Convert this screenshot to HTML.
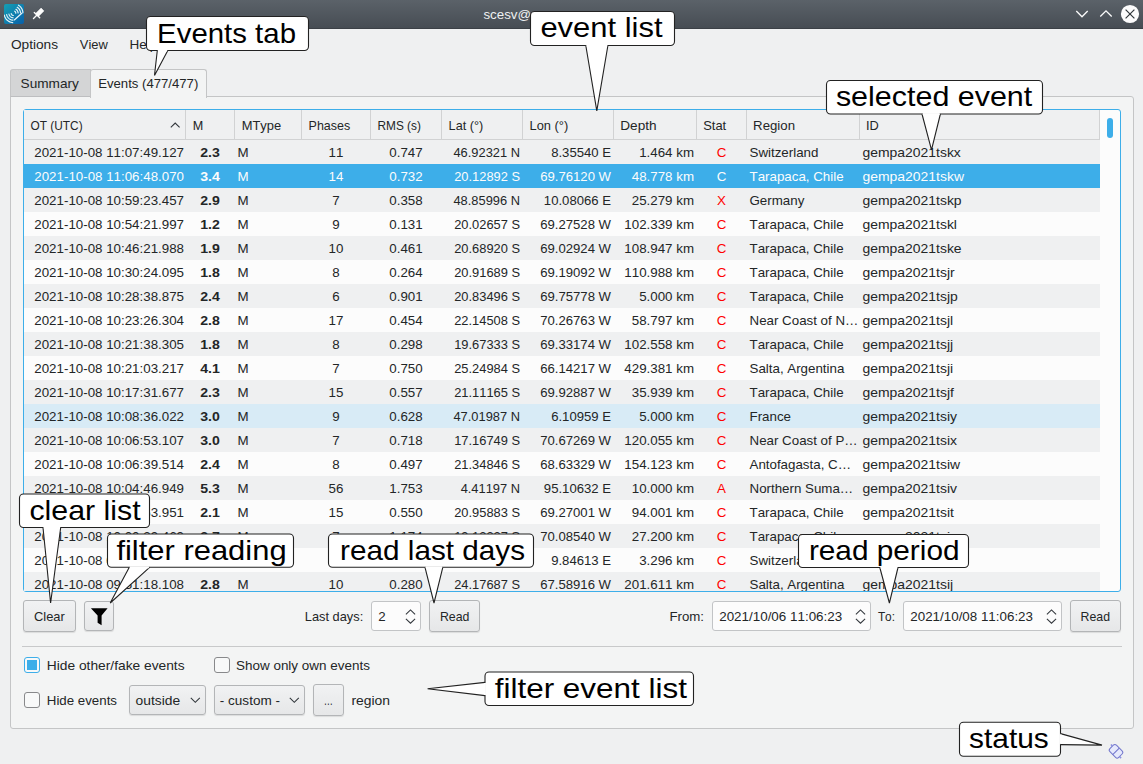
<!DOCTYPE html>
<html><head><meta charset="utf-8">
<style>
*{margin:0;padding:0;box-sizing:border-box}
html,body{width:1143px;height:764px;overflow:hidden;background:#eff0f1;font-family:"Liberation Sans",sans-serif;color:#232627}
text{font-kerning:none}
.abs{position:absolute}
.btn{position:absolute;border:1px solid #b3b5b7;border-radius:3px;background:linear-gradient(#f1f2f3,#e6e7e8);box-shadow:0 1px 1px rgba(0,0,0,0.10)}
.spin{position:absolute;border:1px solid #c2c4c6;border-radius:3px;background:#fcfcfc}
.cb{position:absolute;width:16px;height:16px;border:1px solid #88898b;border-radius:3px;background:#f8f9f9}
</style></head><body>
<div class="abs" style="left:0;top:0;width:1143px;height:29px;background:linear-gradient(#5b6269,#464c53)"></div>
<div class="abs" style="left:0;top:28px;width:1143px;height:1px;background:#3b4046"></div>
<svg class="abs" style="left:4px;top:4px" width="20" height="20" viewBox="0 0 20 20">
  <defs><linearGradient id="lg" x1="0" y1="0" x2="1" y2="1"><stop offset="0" stop-color="#14a0b5"/><stop offset="1" stop-color="#0a5fa8"/></linearGradient></defs>
  <rect x="0" y="0" width="20" height="20" rx="2" fill="url(#lg)"/>
  <g fill="none" stroke="#e3f1f7" stroke-width="1.2" stroke-linecap="round" stroke-linejoin="round">
<path d="M8.68 18.56 L7.69 18.42 L6.73 18.18 L5.79 17.84 L4.90 17.39 L4.05 16.86 L3.27 16.24 L2.56 15.54 L1.93 14.77 L1.38 13.94 L0.92 13.05 L0.56 12.12 L0.31 11.15"/>
<path d="M14.48 1.23 L15.10 1.65 L15.69 2.12 L16.23 2.64 L16.74 3.20 L17.19 3.80 L17.60 4.43 L17.95 5.09 L18.26 5.78 L18.50 6.49 L18.69 7.22 L18.82 7.96 L18.89 8.71"/>
<path d="M8.89 16.17 L8.15 16.07 L7.43 15.89 L6.74 15.63 L6.07 15.30 L5.44 14.90 L4.86 14.44 L4.33 13.92 L3.86 13.35 L3.45 12.73 L3.11 12.07 L2.85 11.37 L2.65 10.66"/>
<path d="M13.21 3.26 L13.67 3.58 L14.11 3.93 L14.51 4.32 L14.89 4.73 L15.23 5.18 L15.53 5.65 L15.80 6.14 L16.02 6.65 L16.20 7.18 L16.34 7.72 L16.44 8.28 L16.49 8.83"/>
<path d="M9.10 13.78 L8.62 13.71 L8.14 13.60 L7.68 13.43 L7.25 13.21 L6.83 12.95 L6.45 12.65 L6.10 12.30 L5.79 11.93 L5.53 11.52 L5.30 11.08 L5.13 10.63 L5.00 10.16"/>
<path d="M11.94 5.30 L12.24 5.51 L12.53 5.74 L12.79 5.99 L13.04 6.26 L13.26 6.56 L13.46 6.87 L13.64 7.19 L13.78 7.53 L13.90 7.87 L14.00 8.23 L14.06 8.59 L14.09 8.96"/>
<path d="M9.30 11.49 L9.06 11.46 L8.82 11.40 L8.59 11.31 L8.37 11.21 L8.17 11.07 L7.98 10.92 L7.80 10.75 L7.65 10.56 L7.51 10.36 L7.40 10.14 L7.31 9.91 L7.25 9.68"/>
<path d="M10.72 7.25 L10.87 7.35 L11.01 7.47 L11.15 7.60 L11.27 7.73 L11.38 7.88 L11.48 8.03 L11.57 8.19 L11.64 8.36 L11.70 8.54 L11.75 8.72 L11.78 8.90 L11.80 9.08"/>
  </g>
  <path d="M10.3 15.9 L17.8 9.3" stroke="#e3f1f7" stroke-width="1.3" stroke-linecap="round"/>
</svg>
<svg class="abs" style="left:32px;top:7px" width="14" height="14" viewBox="0 0 14 14">
  <path d="M6.4 9.4 L11.9 3.9 L9.1 1.1 L3.6 6.6 Z" fill="#fcfcfc" stroke="#fcfcfc" stroke-width="0.6" stroke-linejoin="round"/>
  <path d="M2.3 5.4 L7.7 10.7" stroke="#fcfcfc" stroke-width="1.35" stroke-linecap="round"/>
  <path d="M5 8 L1.5 11.4" stroke="#fcfcfc" stroke-width="1.4" stroke-linecap="round"/>
</svg>
<svg class="abs" style="left:1075px;top:10px" width="14" height="9" viewBox="0 0 14 9"><path d="M1.3 1 L7 6.8 L12.7 1" fill="none" stroke="#fcfcfc" stroke-width="1.3"/></svg>
<svg class="abs" style="left:1099px;top:9px" width="14" height="9" viewBox="0 0 14 9"><path d="M1.3 7.5 L7 1.8 L12.7 7.5" fill="none" stroke="#fcfcfc" stroke-width="1.3"/></svg>
<svg class="abs" style="left:1120px;top:4px" width="20" height="20" viewBox="0 0 20 20"><circle cx="10" cy="10" r="9.1" fill="#fcfcfc"/><path d="M5.6 5.6 L14.4 14.4 M14.4 5.6 L5.6 14.4" stroke="#31363b" stroke-width="1.2"/></svg>

<!-- tab pane -->
<div class="abs" style="left:10px;top:96px;width:1124px;height:633px;background:#f3f4f4;border:1px solid #c4c5c6;border-radius:0 3px 3px 3px"></div>
<div class="abs" style="left:10px;top:69px;width:81px;height:28px;background:#d4d5d6;border:1px solid #c4c5c6;border-bottom:1px solid #bdbec0;border-radius:3px 0 0 0"></div>
<div class="abs" style="left:90px;top:69px;width:117px;height:29px;background:#f3f4f4;border:1px solid #c4c5c6;border-bottom:none;border-radius:3px 3px 0 0"></div>

<!-- table frame -->
<div class="abs" style="left:23px;top:109px;width:1098px;height:483px;border:1px solid #3daee9;border-radius:3px;background:#fcfcfc"></div>
<div class="abs" style="left:24px;top:110px;width:1076px;height:29px;background:#eff0f1"></div>
<div class="abs" style="left:24px;top:139px;width:1076px;height:1px;background:#d1d2d3"></div>
<div class="abs" style="left:185px;top:110px;width:1px;height:29px;background:#d1d2d3"></div>
<div class="abs" style="left:234px;top:110px;width:1px;height:29px;background:#d1d2d3"></div>
<div class="abs" style="left:301px;top:110px;width:1px;height:29px;background:#d1d2d3"></div>
<div class="abs" style="left:370px;top:110px;width:1px;height:29px;background:#d1d2d3"></div>
<div class="abs" style="left:441px;top:110px;width:1px;height:29px;background:#d1d2d3"></div>
<div class="abs" style="left:522px;top:110px;width:1px;height:29px;background:#d1d2d3"></div>
<div class="abs" style="left:613px;top:110px;width:1px;height:29px;background:#d1d2d3"></div>
<div class="abs" style="left:696px;top:110px;width:1px;height:29px;background:#d1d2d3"></div>
<div class="abs" style="left:746px;top:110px;width:1px;height:29px;background:#d1d2d3"></div>
<div class="abs" style="left:859px;top:110px;width:1px;height:29px;background:#d1d2d3"></div>
<div class="abs" style="left:1099px;top:110px;width:1px;height:29px;background:#d1d2d3"></div>
<div class="abs" style="left:24px;top:140px;width:1076px;height:24px;background:#eff0f1"></div>
<div class="abs" style="left:24px;top:164px;width:1076px;height:24px;background:#3daee9"></div>
<div class="abs" style="left:24px;top:188px;width:1076px;height:24px;background:#eff0f1"></div>
<div class="abs" style="left:24px;top:212px;width:1076px;height:24px;background:#fcfcfc"></div>
<div class="abs" style="left:24px;top:236px;width:1076px;height:24px;background:#eff0f1"></div>
<div class="abs" style="left:24px;top:260px;width:1076px;height:24px;background:#fcfcfc"></div>
<div class="abs" style="left:24px;top:284px;width:1076px;height:24px;background:#eff0f1"></div>
<div class="abs" style="left:24px;top:308px;width:1076px;height:24px;background:#fcfcfc"></div>
<div class="abs" style="left:24px;top:332px;width:1076px;height:24px;background:#eff0f1"></div>
<div class="abs" style="left:24px;top:356px;width:1076px;height:24px;background:#fcfcfc"></div>
<div class="abs" style="left:24px;top:380px;width:1076px;height:24px;background:#eff0f1"></div>
<div class="abs" style="left:24px;top:404px;width:1076px;height:24px;background:#d8ebf6"></div>
<div class="abs" style="left:24px;top:428px;width:1076px;height:24px;background:#eff0f1"></div>
<div class="abs" style="left:24px;top:452px;width:1076px;height:24px;background:#fcfcfc"></div>
<div class="abs" style="left:24px;top:476px;width:1076px;height:24px;background:#eff0f1"></div>
<div class="abs" style="left:24px;top:500px;width:1076px;height:24px;background:#fcfcfc"></div>
<div class="abs" style="left:24px;top:524px;width:1076px;height:24px;background:#eff0f1"></div>
<div class="abs" style="left:24px;top:548px;width:1076px;height:24px;background:#fcfcfc"></div>
<div class="abs" style="left:24px;top:572px;width:1076px;height:19px;background:#eff0f1"></div>
<div class="abs" style="left:1107px;top:118px;width:6px;height:20px;border-radius:3px;background:#3daee9"></div>
<svg class="abs" style="left:170px;top:121px" width="11" height="8" viewBox="0 0 11 8"><path d="M0.8 6.4 L5.2 2 L9.6 6.4" fill="none" stroke="#31363b" stroke-width="1.1"/></svg>

<!-- bottom controls -->
<div class="btn" style="left:23px;top:600px;width:53px;height:32px"></div>
<div class="btn" style="left:84px;top:601px;width:30px;height:30px"><svg class="abs" style="left:5px;top:5px" width="20" height="20" viewBox="0 0 20 20"><path d="M0.9 1.3 L17.6 1.3 L11.6 8.6 L11.6 18.3 L7.6 15.8 L7.6 8.6 Z" fill="#000"/></svg></div>
<div class="spin" style="left:371px;top:601px;width:50px;height:30px"><svg class="abs" style="left:32.5px;top:6px" width="11" height="17" viewBox="0 0 11 17"><path d="M0.9 6.4 L5.5 1.9 L10.1 6.4 M0.9 10.9 L5.5 15.2 L10.1 10.9" fill="none" stroke="#31363b" stroke-width="1.05"/></svg></div>
<div class="btn" style="left:429px;top:600px;width:51px;height:32px"></div>
<div class="spin" style="left:712px;top:601px;width:159px;height:30px"><svg class="abs" style="left:141.5px;top:6px" width="11" height="17" viewBox="0 0 11 17"><path d="M0.9 6.4 L5.5 1.9 L10.1 6.4 M0.9 10.9 L5.5 15.2 L10.1 10.9" fill="none" stroke="#31363b" stroke-width="1.05"/></svg></div>
<div class="spin" style="left:903px;top:601px;width:159px;height:30px"><svg class="abs" style="left:141.5px;top:6px" width="11" height="17" viewBox="0 0 11 17"><path d="M0.9 6.4 L5.5 1.9 L10.1 6.4 M0.9 10.9 L5.5 15.2 L10.1 10.9" fill="none" stroke="#31363b" stroke-width="1.05"/></svg></div>
<div class="btn" style="left:1070px;top:600px;width:51px;height:32px"></div>
<div class="abs" style="left:22px;top:646px;width:1100px;height:1px;background:#c8c9ca"></div>

<div class="cb" style="left:24px;top:657px;border-color:#3daee9"><div class="abs" style="left:2px;top:2px;width:10px;height:10px;background:#3daee9"></div></div>
<div class="cb" style="left:214px;top:657px"></div>
<div class="cb" style="left:24px;top:692px"></div>
<div class="btn" style="left:129px;top:685px;width:77px;height:30px"><svg class="abs" style="left:60px;top:11px" width="11" height="7" viewBox="0 0 11 7"><path d="M0.8 0.8 L5.3 5.3 L9.8 0.8" fill="none" stroke="#31363b" stroke-width="1.05"/></svg></div>
<div class="btn" style="left:214px;top:685px;width:91px;height:30px"><svg class="abs" style="left:74px;top:11px" width="11" height="7" viewBox="0 0 11 7"><path d="M0.8 0.8 L5.3 5.3 L9.8 0.8" fill="none" stroke="#31363b" stroke-width="1.05"/></svg></div>
<div class="btn" style="left:313px;top:684px;width:31px;height:32px"></div>

<svg class="abs" style="left:0;top:0" width="1143" height="764" viewBox="0 0 1143 764" font-family="Liberation Sans, sans-serif">
<text x="483.4" y="19" font-size="13.33" fill="#eff0f1">scesv@sensor - scesv</text>
<defs><clipPath id="tclip"><rect x="24" y="140" width="1076" height="451"/></clipPath></defs>
<g clip-path="url(#tclip)">
<text x="184.00" y="157.00" font-size="13.33" text-anchor="end" fill="#232627">2021-10-08 11:07:49.127</text>
<text x="210.00" y="157.00" font-size="13.33" font-weight="bold" text-anchor="middle" textLength="19.64" lengthAdjust="spacingAndGlyphs" fill="#232627">2.3</text>
<text x="237.50" y="157.00" font-size="13.33" fill="#232627">M</text>
<text x="336.00" y="157.00" font-size="13.33" text-anchor="middle" fill="#232627">11</text>
<text x="406.00" y="157.00" font-size="13.33" text-anchor="middle" fill="#232627">0.747</text>
<text x="520.00" y="157.00" font-size="13.33" text-anchor="end" textLength="66.52" lengthAdjust="spacingAndGlyphs" fill="#232627">46.92321 N</text>
<text x="611.00" y="157.00" font-size="13.33" text-anchor="end" textLength="59.87" lengthAdjust="spacingAndGlyphs" fill="#232627">8.35540 E</text>
<text x="694.00" y="157.00" font-size="13.33" text-anchor="end" fill="#232627">1.464 km</text>
<text x="721.50" y="157.00" font-size="13.33" text-anchor="middle" fill="#ff0000">C</text>
<text x="749.50" y="157.00" font-size="13.33" fill="#232627">Switzerland</text>
<text x="862.50" y="157.00" font-size="13.33" textLength="98.35" lengthAdjust="spacingAndGlyphs" fill="#232627">gempa2021tskx</text>
<text x="184.00" y="181.00" font-size="13.33" text-anchor="end" fill="#fcfcfc">2021-10-08 11:06:48.070</text>
<text x="210.00" y="181.00" font-size="13.33" font-weight="bold" text-anchor="middle" textLength="19.64" lengthAdjust="spacingAndGlyphs" fill="#fcfcfc">3.4</text>
<text x="237.50" y="181.00" font-size="13.33" fill="#fcfcfc">M</text>
<text x="336.00" y="181.00" font-size="13.33" text-anchor="middle" fill="#fcfcfc">14</text>
<text x="406.00" y="181.00" font-size="13.33" text-anchor="middle" fill="#fcfcfc">0.732</text>
<text x="520.00" y="181.00" font-size="13.33" text-anchor="end" textLength="65.81" lengthAdjust="spacingAndGlyphs" fill="#fcfcfc">20.12892 S</text>
<text x="611.00" y="181.00" font-size="13.33" text-anchor="end" textLength="70.81" lengthAdjust="spacingAndGlyphs" fill="#fcfcfc">69.76120 W</text>
<text x="694.00" y="181.00" font-size="13.33" text-anchor="end" fill="#fcfcfc">48.778 km</text>
<text x="721.50" y="181.00" font-size="13.33" text-anchor="middle" fill="#fcfcfc">C</text>
<text x="749.50" y="181.00" font-size="13.33" fill="#fcfcfc">Tarapaca, Chile</text>
<text x="862.50" y="181.00" font-size="13.33" textLength="101.44" lengthAdjust="spacingAndGlyphs" fill="#fcfcfc">gempa2021tskw</text>
<text x="184.00" y="205.00" font-size="13.33" text-anchor="end" fill="#232627">2021-10-08 10:59:23.457</text>
<text x="210.00" y="205.00" font-size="13.33" font-weight="bold" text-anchor="middle" textLength="19.64" lengthAdjust="spacingAndGlyphs" fill="#232627">2.9</text>
<text x="237.50" y="205.00" font-size="13.33" fill="#232627">M</text>
<text x="336.00" y="205.00" font-size="13.33" text-anchor="middle" fill="#232627">7</text>
<text x="406.00" y="205.00" font-size="13.33" text-anchor="middle" fill="#232627">0.358</text>
<text x="520.00" y="205.00" font-size="13.33" text-anchor="end" textLength="66.52" lengthAdjust="spacingAndGlyphs" fill="#232627">48.85996 N</text>
<text x="611.00" y="205.00" font-size="13.33" text-anchor="end" textLength="67.17" lengthAdjust="spacingAndGlyphs" fill="#232627">10.08066 E</text>
<text x="694.00" y="205.00" font-size="13.33" text-anchor="end" fill="#232627">25.279 km</text>
<text x="721.50" y="205.00" font-size="13.33" text-anchor="middle" fill="#ff0000">X</text>
<text x="749.50" y="205.00" font-size="13.33" fill="#232627">Germany</text>
<text x="862.50" y="205.00" font-size="13.33" textLength="99.13" lengthAdjust="spacingAndGlyphs" fill="#232627">gempa2021tskp</text>
<text x="184.00" y="229.00" font-size="13.33" text-anchor="end" fill="#232627">2021-10-08 10:54:21.997</text>
<text x="210.00" y="229.00" font-size="13.33" font-weight="bold" text-anchor="middle" textLength="19.64" lengthAdjust="spacingAndGlyphs" fill="#232627">1.2</text>
<text x="237.50" y="229.00" font-size="13.33" fill="#232627">M</text>
<text x="336.00" y="229.00" font-size="13.33" text-anchor="middle" fill="#232627">9</text>
<text x="406.00" y="229.00" font-size="13.33" text-anchor="middle" fill="#232627">0.131</text>
<text x="520.00" y="229.00" font-size="13.33" text-anchor="end" textLength="65.81" lengthAdjust="spacingAndGlyphs" fill="#232627">20.02657 S</text>
<text x="611.00" y="229.00" font-size="13.33" text-anchor="end" textLength="70.81" lengthAdjust="spacingAndGlyphs" fill="#232627">69.27528 W</text>
<text x="694.00" y="229.00" font-size="13.33" text-anchor="end" fill="#232627">102.339 km</text>
<text x="721.50" y="229.00" font-size="13.33" text-anchor="middle" fill="#ff0000">C</text>
<text x="749.50" y="229.00" font-size="13.33" fill="#232627">Tarapaca, Chile</text>
<text x="862.50" y="229.00" font-size="13.33" textLength="94.48" lengthAdjust="spacingAndGlyphs" fill="#232627">gempa2021tskl</text>
<text x="184.00" y="253.00" font-size="13.33" text-anchor="end" fill="#232627">2021-10-08 10:46:21.988</text>
<text x="210.00" y="253.00" font-size="13.33" font-weight="bold" text-anchor="middle" textLength="19.64" lengthAdjust="spacingAndGlyphs" fill="#232627">1.9</text>
<text x="237.50" y="253.00" font-size="13.33" fill="#232627">M</text>
<text x="336.00" y="253.00" font-size="13.33" text-anchor="middle" fill="#232627">10</text>
<text x="406.00" y="253.00" font-size="13.33" text-anchor="middle" fill="#232627">0.461</text>
<text x="520.00" y="253.00" font-size="13.33" text-anchor="end" textLength="65.81" lengthAdjust="spacingAndGlyphs" fill="#232627">20.68920 S</text>
<text x="611.00" y="253.00" font-size="13.33" text-anchor="end" textLength="70.81" lengthAdjust="spacingAndGlyphs" fill="#232627">69.02924 W</text>
<text x="694.00" y="253.00" font-size="13.33" text-anchor="end" fill="#232627">108.947 km</text>
<text x="721.50" y="253.00" font-size="13.33" text-anchor="middle" fill="#ff0000">C</text>
<text x="749.50" y="253.00" font-size="13.33" fill="#232627">Tarapaca, Chile</text>
<text x="862.50" y="253.00" font-size="13.33" textLength="99.13" lengthAdjust="spacingAndGlyphs" fill="#232627">gempa2021tske</text>
<text x="184.00" y="277.00" font-size="13.33" text-anchor="end" fill="#232627">2021-10-08 10:30:24.095</text>
<text x="210.00" y="277.00" font-size="13.33" font-weight="bold" text-anchor="middle" textLength="19.64" lengthAdjust="spacingAndGlyphs" fill="#232627">1.8</text>
<text x="237.50" y="277.00" font-size="13.33" fill="#232627">M</text>
<text x="336.00" y="277.00" font-size="13.33" text-anchor="middle" fill="#232627">8</text>
<text x="406.00" y="277.00" font-size="13.33" text-anchor="middle" fill="#232627">0.264</text>
<text x="520.00" y="277.00" font-size="13.33" text-anchor="end" textLength="65.81" lengthAdjust="spacingAndGlyphs" fill="#232627">20.91689 S</text>
<text x="611.00" y="277.00" font-size="13.33" text-anchor="end" textLength="70.81" lengthAdjust="spacingAndGlyphs" fill="#232627">69.19092 W</text>
<text x="694.00" y="277.00" font-size="13.33" text-anchor="end" fill="#232627">110.988 km</text>
<text x="721.50" y="277.00" font-size="13.33" text-anchor="middle" fill="#ff0000">C</text>
<text x="749.50" y="277.00" font-size="13.33" fill="#232627">Tarapaca, Chile</text>
<text x="862.50" y="277.00" font-size="13.33" textLength="92.15" lengthAdjust="spacingAndGlyphs" fill="#232627">gempa2021tsjr</text>
<text x="184.00" y="301.00" font-size="13.33" text-anchor="end" fill="#232627">2021-10-08 10:28:38.875</text>
<text x="210.00" y="301.00" font-size="13.33" font-weight="bold" text-anchor="middle" textLength="19.64" lengthAdjust="spacingAndGlyphs" fill="#232627">2.4</text>
<text x="237.50" y="301.00" font-size="13.33" fill="#232627">M</text>
<text x="336.00" y="301.00" font-size="13.33" text-anchor="middle" fill="#232627">6</text>
<text x="406.00" y="301.00" font-size="13.33" text-anchor="middle" fill="#232627">0.901</text>
<text x="520.00" y="301.00" font-size="13.33" text-anchor="end" textLength="65.81" lengthAdjust="spacingAndGlyphs" fill="#232627">20.83496 S</text>
<text x="611.00" y="301.00" font-size="13.33" text-anchor="end" textLength="70.81" lengthAdjust="spacingAndGlyphs" fill="#232627">69.75778 W</text>
<text x="694.00" y="301.00" font-size="13.33" text-anchor="end" fill="#232627">5.000 km</text>
<text x="721.50" y="301.00" font-size="13.33" text-anchor="middle" fill="#ff0000">C</text>
<text x="749.50" y="301.00" font-size="13.33" fill="#232627">Tarapaca, Chile</text>
<text x="862.50" y="301.00" font-size="13.33" textLength="95.26" lengthAdjust="spacingAndGlyphs" fill="#232627">gempa2021tsjp</text>
<text x="184.00" y="325.00" font-size="13.33" text-anchor="end" fill="#232627">2021-10-08 10:23:26.304</text>
<text x="210.00" y="325.00" font-size="13.33" font-weight="bold" text-anchor="middle" textLength="19.64" lengthAdjust="spacingAndGlyphs" fill="#232627">2.8</text>
<text x="237.50" y="325.00" font-size="13.33" fill="#232627">M</text>
<text x="336.00" y="325.00" font-size="13.33" text-anchor="middle" fill="#232627">17</text>
<text x="406.00" y="325.00" font-size="13.33" text-anchor="middle" fill="#232627">0.454</text>
<text x="520.00" y="325.00" font-size="13.33" text-anchor="end" textLength="65.81" lengthAdjust="spacingAndGlyphs" fill="#232627">22.14508 S</text>
<text x="611.00" y="325.00" font-size="13.33" text-anchor="end" textLength="70.81" lengthAdjust="spacingAndGlyphs" fill="#232627">70.26763 W</text>
<text x="694.00" y="325.00" font-size="13.33" text-anchor="end" fill="#232627">58.797 km</text>
<text x="721.50" y="325.00" font-size="13.33" text-anchor="middle" fill="#ff0000">C</text>
<text x="749.50" y="325.00" font-size="13.33" fill="#232627">Near Coast of N…</text>
<text x="862.50" y="325.00" font-size="13.33" textLength="90.61" lengthAdjust="spacingAndGlyphs" fill="#232627">gempa2021tsjl</text>
<text x="184.00" y="349.00" font-size="13.33" text-anchor="end" fill="#232627">2021-10-08 10:21:38.305</text>
<text x="210.00" y="349.00" font-size="13.33" font-weight="bold" text-anchor="middle" textLength="19.64" lengthAdjust="spacingAndGlyphs" fill="#232627">1.8</text>
<text x="237.50" y="349.00" font-size="13.33" fill="#232627">M</text>
<text x="336.00" y="349.00" font-size="13.33" text-anchor="middle" fill="#232627">8</text>
<text x="406.00" y="349.00" font-size="13.33" text-anchor="middle" fill="#232627">0.298</text>
<text x="520.00" y="349.00" font-size="13.33" text-anchor="end" textLength="65.81" lengthAdjust="spacingAndGlyphs" fill="#232627">19.67333 S</text>
<text x="611.00" y="349.00" font-size="13.33" text-anchor="end" textLength="70.81" lengthAdjust="spacingAndGlyphs" fill="#232627">69.33174 W</text>
<text x="694.00" y="349.00" font-size="13.33" text-anchor="end" fill="#232627">102.558 km</text>
<text x="721.50" y="349.00" font-size="13.33" text-anchor="middle" fill="#ff0000">C</text>
<text x="749.50" y="349.00" font-size="13.33" fill="#232627">Tarapaca, Chile</text>
<text x="862.50" y="349.00" font-size="13.33" textLength="90.61" lengthAdjust="spacingAndGlyphs" fill="#232627">gempa2021tsjj</text>
<text x="184.00" y="373.00" font-size="13.33" text-anchor="end" fill="#232627">2021-10-08 10:21:03.217</text>
<text x="210.00" y="373.00" font-size="13.33" font-weight="bold" text-anchor="middle" textLength="19.64" lengthAdjust="spacingAndGlyphs" fill="#232627">4.1</text>
<text x="237.50" y="373.00" font-size="13.33" fill="#232627">M</text>
<text x="336.00" y="373.00" font-size="13.33" text-anchor="middle" fill="#232627">7</text>
<text x="406.00" y="373.00" font-size="13.33" text-anchor="middle" fill="#232627">0.750</text>
<text x="520.00" y="373.00" font-size="13.33" text-anchor="end" textLength="65.81" lengthAdjust="spacingAndGlyphs" fill="#232627">25.24984 S</text>
<text x="611.00" y="373.00" font-size="13.33" text-anchor="end" textLength="70.81" lengthAdjust="spacingAndGlyphs" fill="#232627">66.14217 W</text>
<text x="694.00" y="373.00" font-size="13.33" text-anchor="end" fill="#232627">429.381 km</text>
<text x="721.50" y="373.00" font-size="13.33" text-anchor="middle" fill="#ff0000">C</text>
<text x="749.50" y="373.00" font-size="13.33" fill="#232627">Salta, Argentina</text>
<text x="862.50" y="373.00" font-size="13.33" textLength="90.61" lengthAdjust="spacingAndGlyphs" fill="#232627">gempa2021tsji</text>
<text x="184.00" y="397.00" font-size="13.33" text-anchor="end" fill="#232627">2021-10-08 10:17:31.677</text>
<text x="210.00" y="397.00" font-size="13.33" font-weight="bold" text-anchor="middle" textLength="19.64" lengthAdjust="spacingAndGlyphs" fill="#232627">2.3</text>
<text x="237.50" y="397.00" font-size="13.33" fill="#232627">M</text>
<text x="336.00" y="397.00" font-size="13.33" text-anchor="middle" fill="#232627">15</text>
<text x="406.00" y="397.00" font-size="13.33" text-anchor="middle" fill="#232627">0.557</text>
<text x="520.00" y="397.00" font-size="13.33" text-anchor="end" textLength="65.81" lengthAdjust="spacingAndGlyphs" fill="#232627">21.11165 S</text>
<text x="611.00" y="397.00" font-size="13.33" text-anchor="end" textLength="70.81" lengthAdjust="spacingAndGlyphs" fill="#232627">69.92887 W</text>
<text x="694.00" y="397.00" font-size="13.33" text-anchor="end" fill="#232627">35.939 km</text>
<text x="721.50" y="397.00" font-size="13.33" text-anchor="middle" fill="#ff0000">C</text>
<text x="749.50" y="397.00" font-size="13.33" fill="#232627">Tarapaca, Chile</text>
<text x="862.50" y="397.00" font-size="13.33" textLength="91.38" lengthAdjust="spacingAndGlyphs" fill="#232627">gempa2021tsjf</text>
<text x="184.00" y="421.00" font-size="13.33" text-anchor="end" fill="#232627">2021-10-08 10:08:36.022</text>
<text x="210.00" y="421.00" font-size="13.33" font-weight="bold" text-anchor="middle" textLength="19.64" lengthAdjust="spacingAndGlyphs" fill="#232627">3.0</text>
<text x="237.50" y="421.00" font-size="13.33" fill="#232627">M</text>
<text x="336.00" y="421.00" font-size="13.33" text-anchor="middle" fill="#232627">9</text>
<text x="406.00" y="421.00" font-size="13.33" text-anchor="middle" fill="#232627">0.628</text>
<text x="520.00" y="421.00" font-size="13.33" text-anchor="end" textLength="66.52" lengthAdjust="spacingAndGlyphs" fill="#232627">47.01987 N</text>
<text x="611.00" y="421.00" font-size="13.33" text-anchor="end" textLength="59.87" lengthAdjust="spacingAndGlyphs" fill="#232627">6.10959 E</text>
<text x="694.00" y="421.00" font-size="13.33" text-anchor="end" fill="#232627">5.000 km</text>
<text x="721.50" y="421.00" font-size="13.33" text-anchor="middle" fill="#ff0000">C</text>
<text x="749.50" y="421.00" font-size="13.33" fill="#232627">France</text>
<text x="862.50" y="421.00" font-size="13.33" textLength="94.48" lengthAdjust="spacingAndGlyphs" fill="#232627">gempa2021tsiy</text>
<text x="184.00" y="445.00" font-size="13.33" text-anchor="end" fill="#232627">2021-10-08 10:06:53.107</text>
<text x="210.00" y="445.00" font-size="13.33" font-weight="bold" text-anchor="middle" textLength="19.64" lengthAdjust="spacingAndGlyphs" fill="#232627">3.0</text>
<text x="237.50" y="445.00" font-size="13.33" fill="#232627">M</text>
<text x="336.00" y="445.00" font-size="13.33" text-anchor="middle" fill="#232627">7</text>
<text x="406.00" y="445.00" font-size="13.33" text-anchor="middle" fill="#232627">0.718</text>
<text x="520.00" y="445.00" font-size="13.33" text-anchor="end" textLength="65.81" lengthAdjust="spacingAndGlyphs" fill="#232627">17.16749 S</text>
<text x="611.00" y="445.00" font-size="13.33" text-anchor="end" textLength="70.81" lengthAdjust="spacingAndGlyphs" fill="#232627">70.67269 W</text>
<text x="694.00" y="445.00" font-size="13.33" text-anchor="end" fill="#232627">120.055 km</text>
<text x="721.50" y="445.00" font-size="13.33" text-anchor="middle" fill="#ff0000">C</text>
<text x="749.50" y="445.00" font-size="13.33" fill="#232627">Near Coast of P…</text>
<text x="862.50" y="445.00" font-size="13.33" textLength="94.48" lengthAdjust="spacingAndGlyphs" fill="#232627">gempa2021tsix</text>
<text x="184.00" y="469.00" font-size="13.33" text-anchor="end" fill="#232627">2021-10-08 10:06:39.514</text>
<text x="210.00" y="469.00" font-size="13.33" font-weight="bold" text-anchor="middle" textLength="19.64" lengthAdjust="spacingAndGlyphs" fill="#232627">2.4</text>
<text x="237.50" y="469.00" font-size="13.33" fill="#232627">M</text>
<text x="336.00" y="469.00" font-size="13.33" text-anchor="middle" fill="#232627">8</text>
<text x="406.00" y="469.00" font-size="13.33" text-anchor="middle" fill="#232627">0.497</text>
<text x="520.00" y="469.00" font-size="13.33" text-anchor="end" textLength="65.81" lengthAdjust="spacingAndGlyphs" fill="#232627">21.34846 S</text>
<text x="611.00" y="469.00" font-size="13.33" text-anchor="end" textLength="70.81" lengthAdjust="spacingAndGlyphs" fill="#232627">68.63329 W</text>
<text x="694.00" y="469.00" font-size="13.33" text-anchor="end" fill="#232627">154.123 km</text>
<text x="721.50" y="469.00" font-size="13.33" text-anchor="middle" fill="#ff0000">C</text>
<text x="749.50" y="469.00" font-size="13.33" fill="#232627">Antofagasta, C…</text>
<text x="862.50" y="469.00" font-size="13.33" textLength="97.57" lengthAdjust="spacingAndGlyphs" fill="#232627">gempa2021tsiw</text>
<text x="184.00" y="493.00" font-size="13.33" text-anchor="end" fill="#232627">2021-10-08 10:04:46.949</text>
<text x="210.00" y="493.00" font-size="13.33" font-weight="bold" text-anchor="middle" textLength="19.64" lengthAdjust="spacingAndGlyphs" fill="#232627">5.3</text>
<text x="237.50" y="493.00" font-size="13.33" fill="#232627">M</text>
<text x="336.00" y="493.00" font-size="13.33" text-anchor="middle" fill="#232627">56</text>
<text x="406.00" y="493.00" font-size="13.33" text-anchor="middle" fill="#232627">1.753</text>
<text x="520.00" y="493.00" font-size="13.33" text-anchor="end" textLength="59.36" lengthAdjust="spacingAndGlyphs" fill="#232627">4.41197 N</text>
<text x="611.00" y="493.00" font-size="13.33" text-anchor="end" textLength="67.17" lengthAdjust="spacingAndGlyphs" fill="#232627">95.10632 E</text>
<text x="694.00" y="493.00" font-size="13.33" text-anchor="end" fill="#232627">10.000 km</text>
<text x="721.50" y="493.00" font-size="13.33" text-anchor="middle" fill="#ff0000">A</text>
<text x="749.50" y="493.00" font-size="13.33" fill="#232627">Northern Suma…</text>
<text x="862.50" y="493.00" font-size="13.33" textLength="94.48" lengthAdjust="spacingAndGlyphs" fill="#232627">gempa2021tsiv</text>
<text x="184.00" y="517.00" font-size="13.33" text-anchor="end" fill="#232627">2021-10-08 10:03:53.951</text>
<text x="210.00" y="517.00" font-size="13.33" font-weight="bold" text-anchor="middle" textLength="19.64" lengthAdjust="spacingAndGlyphs" fill="#232627">2.1</text>
<text x="237.50" y="517.00" font-size="13.33" fill="#232627">M</text>
<text x="336.00" y="517.00" font-size="13.33" text-anchor="middle" fill="#232627">15</text>
<text x="406.00" y="517.00" font-size="13.33" text-anchor="middle" fill="#232627">0.550</text>
<text x="520.00" y="517.00" font-size="13.33" text-anchor="end" textLength="65.81" lengthAdjust="spacingAndGlyphs" fill="#232627">20.95883 S</text>
<text x="611.00" y="517.00" font-size="13.33" text-anchor="end" textLength="70.81" lengthAdjust="spacingAndGlyphs" fill="#232627">69.27001 W</text>
<text x="694.00" y="517.00" font-size="13.33" text-anchor="end" fill="#232627">94.001 km</text>
<text x="721.50" y="517.00" font-size="13.33" text-anchor="middle" fill="#ff0000">C</text>
<text x="749.50" y="517.00" font-size="13.33" fill="#232627">Tarapaca, Chile</text>
<text x="862.50" y="517.00" font-size="13.33" textLength="91.38" lengthAdjust="spacingAndGlyphs" fill="#232627">gempa2021tsit</text>
<text x="184.00" y="541.00" font-size="13.33" text-anchor="end" fill="#232627">2021-10-08 10:00:29.469</text>
<text x="210.00" y="541.00" font-size="13.33" font-weight="bold" text-anchor="middle" textLength="19.64" lengthAdjust="spacingAndGlyphs" fill="#232627">2.7</text>
<text x="237.50" y="541.00" font-size="13.33" fill="#232627">M</text>
<text x="336.00" y="541.00" font-size="13.33" text-anchor="middle" fill="#232627">7</text>
<text x="406.00" y="541.00" font-size="13.33" text-anchor="middle" fill="#232627">1.174</text>
<text x="520.00" y="541.00" font-size="13.33" text-anchor="end" textLength="65.81" lengthAdjust="spacingAndGlyphs" fill="#232627">19.12327 S</text>
<text x="611.00" y="541.00" font-size="13.33" text-anchor="end" textLength="70.81" lengthAdjust="spacingAndGlyphs" fill="#232627">70.08540 W</text>
<text x="694.00" y="541.00" font-size="13.33" text-anchor="end" fill="#232627">27.200 km</text>
<text x="721.50" y="541.00" font-size="13.33" text-anchor="middle" fill="#ff0000">C</text>
<text x="749.50" y="541.00" font-size="13.33" fill="#232627">Tarapaca, Chile</text>
<text x="862.50" y="541.00" font-size="13.33" textLength="94.48" lengthAdjust="spacingAndGlyphs" fill="#232627">gempa2021tsis</text>
<text x="184.00" y="565.00" font-size="13.33" text-anchor="end" fill="#232627">2021-10-08 09:58:12.330</text>
<text x="210.00" y="565.00" font-size="13.33" font-weight="bold" text-anchor="middle" textLength="19.64" lengthAdjust="spacingAndGlyphs" fill="#232627">2.2</text>
<text x="237.50" y="565.00" font-size="13.33" fill="#232627">M</text>
<text x="336.00" y="565.00" font-size="13.33" text-anchor="middle" fill="#232627">9</text>
<text x="406.00" y="565.00" font-size="13.33" text-anchor="middle" fill="#232627">0.412</text>
<text x="520.00" y="565.00" font-size="13.33" text-anchor="end" textLength="66.52" lengthAdjust="spacingAndGlyphs" fill="#232627">46.31530 N</text>
<text x="611.00" y="565.00" font-size="13.33" text-anchor="end" textLength="59.87" lengthAdjust="spacingAndGlyphs" fill="#232627">9.84613 E</text>
<text x="694.00" y="565.00" font-size="13.33" text-anchor="end" fill="#232627">3.296 km</text>
<text x="721.50" y="565.00" font-size="13.33" text-anchor="middle" fill="#ff0000">C</text>
<text x="749.50" y="565.00" font-size="13.33" fill="#232627">Switzerland</text>
<text x="862.50" y="565.00" font-size="13.33" textLength="99.11" lengthAdjust="spacingAndGlyphs" fill="#232627">gempa2021tsim</text>
<text x="184.00" y="589.00" font-size="13.33" text-anchor="end" fill="#232627">2021-10-08 09:51:18.108</text>
<text x="210.00" y="589.00" font-size="13.33" font-weight="bold" text-anchor="middle" textLength="19.64" lengthAdjust="spacingAndGlyphs" fill="#232627">2.8</text>
<text x="237.50" y="589.00" font-size="13.33" fill="#232627">M</text>
<text x="336.00" y="589.00" font-size="13.33" text-anchor="middle" fill="#232627">10</text>
<text x="406.00" y="589.00" font-size="13.33" text-anchor="middle" fill="#232627">0.280</text>
<text x="520.00" y="589.00" font-size="13.33" text-anchor="end" textLength="65.81" lengthAdjust="spacingAndGlyphs" fill="#232627">24.17687 S</text>
<text x="611.00" y="589.00" font-size="13.33" text-anchor="end" textLength="70.81" lengthAdjust="spacingAndGlyphs" fill="#232627">67.58916 W</text>
<text x="694.00" y="589.00" font-size="13.33" text-anchor="end" fill="#232627">201.611 km</text>
<text x="721.50" y="589.00" font-size="13.33" text-anchor="middle" fill="#ff0000">C</text>
<text x="749.50" y="589.00" font-size="13.33" fill="#232627">Salta, Argentina</text>
<text x="862.50" y="589.00" font-size="13.33" textLength="90.61" lengthAdjust="spacingAndGlyphs" fill="#232627">gempa2021tsij</text>
</g>
<text x="30.60" y="130.00" font-size="13.5" fill="#232627" textLength="52.00" lengthAdjust="spacingAndGlyphs">OT (UTC)</text>
<text x="192.70" y="130.00" font-size="13.5" fill="#232627" textLength="10.50" lengthAdjust="spacingAndGlyphs">M</text>
<text x="241.70" y="130.00" font-size="13.5" fill="#232627" textLength="39.50" lengthAdjust="spacingAndGlyphs">MType</text>
<text x="308.60" y="130.00" font-size="13.5" fill="#232627" textLength="41.61" lengthAdjust="spacingAndGlyphs">Phases</text>
<text x="377.50" y="130.00" font-size="13.5" fill="#232627" textLength="43.40" lengthAdjust="spacingAndGlyphs">RMS (s)</text>
<text x="448.60" y="130.00" font-size="13.5" fill="#232627" textLength="34.60" lengthAdjust="spacingAndGlyphs">Lat (°)</text>
<text x="529.50" y="130.00" font-size="13.5" fill="#232627" textLength="38.70" lengthAdjust="spacingAndGlyphs">Lon (°)</text>
<text x="620.30" y="130.00" font-size="13.5" fill="#232627" textLength="36.31" lengthAdjust="spacingAndGlyphs">Depth</text>
<text x="703.20" y="130.00" font-size="13.5" fill="#232627" textLength="23.00" lengthAdjust="spacingAndGlyphs">Stat</text>
<text x="753.10" y="130.00" font-size="13.5" fill="#232627" textLength="41.90" lengthAdjust="spacingAndGlyphs">Region</text>
<text x="866.00" y="130.00" font-size="13.5" fill="#232627" textLength="12.80" lengthAdjust="spacingAndGlyphs">ID</text>
<text x="10.90" y="49.00" font-size="13.5" fill="#232627" textLength="47.20" lengthAdjust="spacingAndGlyphs">Options</text>
<text x="79.80" y="49.00" font-size="13.5" fill="#232627" textLength="27.97" lengthAdjust="spacingAndGlyphs">View</text>
<text x="129.50" y="49.00" font-size="13.5" fill="#232627">Help</text>
<text x="20.60" y="88.00" font-size="13.5" fill="#232627" textLength="58.30" lengthAdjust="spacingAndGlyphs">Summary</text>
<text x="98.20" y="88.00" font-size="13.5" fill="#232627" textLength="100.10" lengthAdjust="spacingAndGlyphs">Events (477/477)</text>
<text x="34.00" y="621.00" font-size="13.5" fill="#232627" textLength="30.80" lengthAdjust="spacingAndGlyphs">Clear</text>
<text x="304.80" y="621.00" font-size="13.5" fill="#232627" textLength="58.40" lengthAdjust="spacingAndGlyphs">Last days:</text>
<text x="378.30" y="621.00" font-size="13.33" fill="#232627">2</text>
<text x="439.90" y="621.00" font-size="13.5" fill="#232627" textLength="29.50" lengthAdjust="spacingAndGlyphs">Read</text>
<text x="669.40" y="621.00" font-size="13.5" fill="#232627" textLength="34.60" lengthAdjust="spacingAndGlyphs">From:</text>
<text x="719.20" y="621.00" font-size="13.33" fill="#232627" textLength="123.00" lengthAdjust="spacingAndGlyphs">2021/10/06 11:06:23</text>
<text x="877.90" y="621.00" font-size="13.5" fill="#232627" textLength="17.10" lengthAdjust="spacingAndGlyphs">To:</text>
<text x="910.30" y="621.00" font-size="13.33" fill="#232627" textLength="122.70" lengthAdjust="spacingAndGlyphs">2021/10/08 11:06:23</text>
<text x="1080.60" y="621.00" font-size="13.5" fill="#232627" textLength="29.40" lengthAdjust="spacingAndGlyphs">Read</text>
<text x="46.80" y="670.00" font-size="13.5" fill="#232627" textLength="137.80" lengthAdjust="spacingAndGlyphs">Hide other/fake events</text>
<text x="236.00" y="670.00" font-size="13.5" fill="#232627" textLength="133.90" lengthAdjust="spacingAndGlyphs">Show only own events</text>
<text x="46.80" y="705.00" font-size="13.5" fill="#232627" textLength="70.20" lengthAdjust="spacingAndGlyphs">Hide events</text>
<text x="135.50" y="705.00" font-size="13.5" fill="#232627" textLength="44.59" lengthAdjust="spacingAndGlyphs">outside</text>
<text x="219.80" y="705.00" font-size="13.5" fill="#232627" textLength="60.20" lengthAdjust="spacingAndGlyphs">- custom -</text>
<text x="323.80" y="705.00" font-size="13.33" fill="#232627" textLength="9.20" lengthAdjust="spacingAndGlyphs">…</text>
<text x="351.40" y="705.00" font-size="13.5" fill="#232627" textLength="38.60" lengthAdjust="spacingAndGlyphs">region</text>
<g transform="translate(1116,751.3) rotate(45)">
  <rect x="-6.2" y="-4.6" width="12.4" height="9.2" rx="2.2" fill="#e6e9fc" stroke="#7276cc" stroke-width="1"/>
  <line x1="0" y1="-4.6" x2="0" y2="4.6" stroke="#7276cc" stroke-width="1"/>
  <path d="M-6.2 -1.2 L-8.4 -1.2 M6.2 1.2 L8.4 1.2" stroke="#8d91e0" stroke-width="1.6"/>
</g>
<rect x="146.5" y="16.5" width="162.00" height="34.00" rx="4" ry="4" fill="#fff" stroke="#222" stroke-width="1.1"/>
<polygon points="157.3,50.5 154.5,75.4 167.8,50.5" fill="#fff" stroke="none"/>
<polyline points="157.3,50.5 154.5,75.4 167.8,50.5" fill="none" stroke="#222" stroke-width="1.1"/>
<line x1="158.0" y1="50.5" x2="167.10000000000002" y2="50.5" stroke="#fff" stroke-width="1.9"/>
<text x="157.10" y="42.70" font-size="28.5" textLength="138.90" lengthAdjust="spacingAndGlyphs" fill="#000">Events tab</text>
<rect x="530.5" y="11.5" width="144.00" height="34.00" rx="4" ry="4" fill="#fff" stroke="#222" stroke-width="1.1"/>
<polygon points="585.8,45.5 596.8,110.8 607.9,45.5" fill="#fff" stroke="none"/>
<polyline points="585.8,45.5 596.8,110.8 607.9,45.5" fill="none" stroke="#222" stroke-width="1.1"/>
<line x1="586.5" y1="45.5" x2="607.1999999999999" y2="45.5" stroke="#fff" stroke-width="1.9"/>
<text x="540.40" y="36.80" font-size="28.5" textLength="122.11" lengthAdjust="spacingAndGlyphs" fill="#000">event list</text>
<rect x="826.5" y="80.5" width="216.00" height="33.50" rx="4" ry="4" fill="#fff" stroke="#222" stroke-width="1.1"/>
<polygon points="922,114.0 931.5,149.8 940.4,114.0" fill="#fff" stroke="none"/>
<polyline points="922,114.0 931.5,149.8 940.4,114.0" fill="none" stroke="#222" stroke-width="1.1"/>
<line x1="922.7" y1="114.0" x2="939.6999999999999" y2="114.0" stroke="#fff" stroke-width="1.9"/>
<text x="835.90" y="105.60" font-size="28.5" textLength="196.39" lengthAdjust="spacingAndGlyphs" fill="#000">selected event</text>
<rect x="19.5" y="494.0" width="130.00" height="33.50" rx="4" ry="4" fill="#fff" stroke="#222" stroke-width="1.1"/>
<polygon points="43,527.5 50.6,603 60.7,527.5" fill="#fff" stroke="none"/>
<polyline points="43,527.5 50.6,603 60.7,527.5" fill="none" stroke="#222" stroke-width="1.1"/>
<line x1="43.7" y1="527.5" x2="60.0" y2="527.5" stroke="#fff" stroke-width="1.9"/>
<text x="29.40" y="519.80" font-size="28.5" textLength="111.28" lengthAdjust="spacingAndGlyphs" fill="#000">clear list</text>
<rect x="107.5" y="534.0" width="186.00" height="33.30" rx="4" ry="4" fill="#fff" stroke="#222" stroke-width="1.1"/>
<polygon points="129.3,567.3 110.2,603 149.6,567.3" fill="#fff" stroke="none"/>
<polyline points="129.3,567.3 110.2,603 149.6,567.3" fill="none" stroke="#222" stroke-width="1.1"/>
<line x1="130.0" y1="567.3" x2="148.9" y2="567.3" stroke="#fff" stroke-width="1.9"/>
<text x="116.40" y="559.80" font-size="28.5" textLength="170.20" lengthAdjust="spacingAndGlyphs" fill="#000">filter reading</text>
<rect x="328.5" y="534.0" width="205.00" height="33.30" rx="4" ry="4" fill="#fff" stroke="#222" stroke-width="1.1"/>
<polygon points="425,567.3 434,603 442.8,567.3" fill="#fff" stroke="none"/>
<polyline points="425,567.3 434,603 442.8,567.3" fill="none" stroke="#222" stroke-width="1.1"/>
<line x1="425.7" y1="567.3" x2="442.1" y2="567.3" stroke="#fff" stroke-width="1.9"/>
<text x="340.10" y="559.80" font-size="28.5" textLength="184.89" lengthAdjust="spacingAndGlyphs" fill="#000">read last days</text>
<rect x="798.5" y="534.5" width="170.00" height="33.00" rx="4" ry="4" fill="#fff" stroke="#222" stroke-width="1.1"/>
<polygon points="879.8,567.5 889.4,603 898,567.5" fill="#fff" stroke="none"/>
<polyline points="879.8,567.5 889.4,603 898,567.5" fill="none" stroke="#222" stroke-width="1.1"/>
<line x1="880.5" y1="567.5" x2="897.3" y2="567.5" stroke="#fff" stroke-width="1.9"/>
<text x="808.90" y="560.10" font-size="28.5" textLength="150.60" lengthAdjust="spacingAndGlyphs" fill="#000">read period</text>
<rect x="485.0" y="672.0" width="208.50" height="33.50" rx="4" ry="4" fill="#fff" stroke="#222" stroke-width="1.1"/>
<polygon points="485.0,682.4 427.6,688.7 485.0,695.6" fill="#fff" stroke="none"/>
<polyline points="485.0,682.4 427.6,688.7 485.0,695.6" fill="none" stroke="#222" stroke-width="1.1"/>
<line x1="485.0" y1="683.1" x2="485.0" y2="694.9" stroke="#fff" stroke-width="1.9"/>
<text x="494.70" y="697.70" font-size="28.5" textLength="192.31" lengthAdjust="spacingAndGlyphs" fill="#000">filter event list</text>
<rect x="959.5" y="722.3" width="101.00" height="34.00" rx="4" ry="4" fill="#fff" stroke="#222" stroke-width="1.1"/>
<polygon points="1060.5,733.6 1102,745.1 1060.5,744.6" fill="#fff" stroke="none"/>
<polyline points="1060.5,733.6 1102,745.1 1060.5,744.6" fill="none" stroke="#222" stroke-width="1.1"/>
<line x1="1060.5" y1="734.3000000000001" x2="1060.5" y2="743.9" stroke="#fff" stroke-width="1.9"/>
<text x="969.10" y="747.80" font-size="28.5" textLength="79.70" lengthAdjust="spacingAndGlyphs" fill="#000">status</text>
</svg>
</body></html>
